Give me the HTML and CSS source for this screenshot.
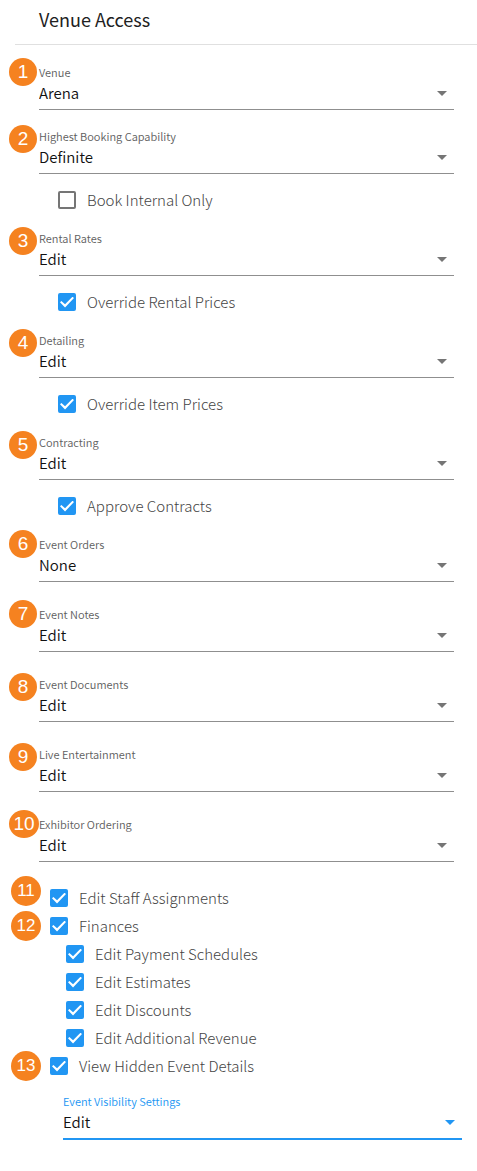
FILE: index.html
```html
<!DOCTYPE html>
<html lang="en">
<head>
  <meta charset="UTF-8" />
  <meta name="viewport" content="width=device-width, initial-scale=1.0" />
  <title>Venue Access</title>
  <link rel="stylesheet" href="styles.css">
</head>
<body>
  <header class="panel-header">
    <h1>Venue Access</h1>
  </header>

  <form class="panel-body">
    <div class="field field-first">
      <span class="badge badge-high">1</span>
      <label for="venue">Venue</label>
      <div class="select-wrap">
        <select id="venue"><option>Arena</option></select>
      </div>
    </div>

    <div class="field">
      <span class="badge">2</span>
      <label for="booking">Highest Booking Capability</label>
      <div class="select-wrap">
        <select id="booking"><option>Definite</option></select>
      </div>
    </div>
    <label class="check check-sub"><input type="checkbox">Book Internal Only</label>

    <div class="field">
      <span class="badge">3</span>
      <label for="rates">Rental Rates</label>
      <div class="select-wrap">
        <select id="rates"><option>Edit</option></select>
      </div>
    </div>
    <label class="check check-sub"><input type="checkbox" checked>Override Rental Prices</label>

    <div class="field">
      <span class="badge">4</span>
      <label for="detailing">Detailing</label>
      <div class="select-wrap">
        <select id="detailing"><option>Edit</option></select>
      </div>
    </div>
    <label class="check check-sub"><input type="checkbox" checked>Override Item Prices</label>

    <div class="field">
      <span class="badge">5</span>
      <label for="contracting">Contracting</label>
      <div class="select-wrap">
        <select id="contracting"><option>Edit</option></select>
      </div>
    </div>
    <label class="check check-sub"><input type="checkbox" checked>Approve Contracts</label>

    <div class="field">
      <span class="badge badge-high">6</span>
      <label for="orders">Event Orders</label>
      <div class="select-wrap">
        <select id="orders"><option>None</option></select>
      </div>
    </div>

    <div class="field">
      <span class="badge badge-high">7</span>
      <label for="notes">Event Notes</label>
      <div class="select-wrap">
        <select id="notes"><option>Edit</option></select>
      </div>
    </div>

    <div class="field">
      <span class="badge">8</span>
      <label for="documents">Event Documents</label>
      <div class="select-wrap">
        <select id="documents"><option>Edit</option></select>
      </div>
    </div>

    <div class="field">
      <span class="badge">9</span>
      <label for="entertainment">Live Entertainment</label>
      <div class="select-wrap">
        <select id="entertainment"><option>Edit</option></select>
      </div>
    </div>

    <div class="field">
      <span class="badge badge-high badge-wide">10</span>
      <label for="exhibitor">Exhibitor Ordering</label>
      <div class="select-wrap">
        <select id="exhibitor"><option>Edit</option></select>
      </div>
    </div>

    <ul class="check-list">
      <li>
        <span class="badge badge-row badge-row-high">11</span>
        <label class="check"><input type="checkbox" checked>Edit Staff Assignments</label>
      </li>
      <li>
        <span class="badge badge-row">12</span>
        <label class="check"><input type="checkbox" checked>Finances</label>
        <ul class="check-children">
          <li><label class="check"><input type="checkbox" checked>Edit Payment Schedules</label></li>
          <li><label class="check"><input type="checkbox" checked>Edit Estimates</label></li>
          <li><label class="check"><input type="checkbox" checked>Edit Discounts</label></li>
          <li><label class="check"><input type="checkbox" checked>Edit Additional Revenue</label></li>
        </ul>
      </li>
      <li>
        <span class="badge badge-row">13</span>
        <label class="check"><input type="checkbox" checked>View Hidden Event Details</label>
      </li>
    </ul>

    <div class="field field-active">
      <label for="visibility">Event Visibility Settings</label>
      <div class="select-wrap">
        <select id="visibility"><option>Edit</option></select>
      </div>
    </div>
  </form>
</body>
</html>
```
FILE: styles.css
```css
* {
  box-sizing: border-box;
}
body {
  margin: 0;
  background: #fff;
  color: #212121;
  font-family: "Source Sans Pro", "Noto Sans CJK SC", "Noto Sans", sans-serif;
  font-size: 15px;
}
.panel-header {
  margin-left: 15px;
  padding: 7px 24px 13px;
  border-bottom: 1px solid #e0e0e0;
}
.panel-header h1 {
  margin: 0;
  font-size: 18px;
  font-weight: 400;
  line-height: 24px;
}
.panel-body {
  padding: 19px 23px 32px 39px;
}

/* drop-down fields */
.field {
  position: relative;
  margin-bottom: 24px;
}
.field-first {
  margin-bottom: 18px;
}
.field label {
  display: block;
  color: #606060;
  font-size: 11px;
  font-weight: 350;
  line-height: 16px;
}
.select-wrap {
  position: relative;
  border-bottom: 1px solid #8f8f8f;
}
.select-wrap::after {
  content: "";
  position: absolute;
  top: 11px;
  right: 7px;
  border: 5px solid transparent;
  border-top-color: #757575;
  border-bottom: 0;
  pointer-events: none;
}
.field select {
  display: block;
  width: 100%;
  height: 29px;
  padding: 0 24px 5px 0;
  border: 0;
  outline: 0;
  background: transparent;
  color: #111;
  font: inherit;
  font-weight: 350;
  appearance: none;
}
.field-active {
  margin: 13px -8px 0 24px;
}
.field-active label {
  color: #2196f3;
}
.field-active .select-wrap {
  border-bottom: 2px solid #2196f3;
}
.field-active .select-wrap::after {
  border-top-color: #2196f3;
}

/* checkboxes */
.check {
  display: flex;
  align-items: center;
  gap: 11px;
  height: 28px;
  color: #444;
  font-weight: 300;
  line-height: 20px;
}
.check-sub {
  margin: -12px 0 16px 19px;
}
.check input {
  display: grid;
  place-items: center;
  width: 18px;
  height: 18px;
  margin: 0;
  border: 2px solid #757575;
  border-radius: 2px;
  background: #fff;
  appearance: none;
}
.check input:checked {
  border-color: #2196f3;
  background: #2196f3;
}
.check input:checked::before {
  content: "";
  width: 14px;
  height: 11px;
  background: #fff;
  clip-path: polygon(0 52%, 10% 40%, 36% 70%, 89% 2%, 100% 14%, 36% 100%);
}
.check-list,
.check-children {
  margin: 0;
  padding: 0;
  list-style: none;
}
.check-list {
  margin: -2px 0 0 11px;
}
.check-list > li {
  position: relative;
}
.check-children {
  padding-left: 16px;
}

/* numbered markers */
.badge {
  position: absolute;
  top: -3px;
  left: -30px;
  width: 28px;
  height: 28px;
  border-radius: 50%;
  background: #f58220;
  color: #fff;
  font-family: "Liberation Sans", Arial, sans-serif;
  font-size: 19px;
  line-height: 28px;
  text-align: center;
}
.badge-high {
  top: -6px;
}
.badge-wide {
  width: 30px;
}
.badge-row {
  top: -1px;
  left: -39px;
  width: 30px;
  height: 30px;
  font-size: 17px;
  line-height: 30px;
}
.badge-row-high {
  top: -8px;
}
```
